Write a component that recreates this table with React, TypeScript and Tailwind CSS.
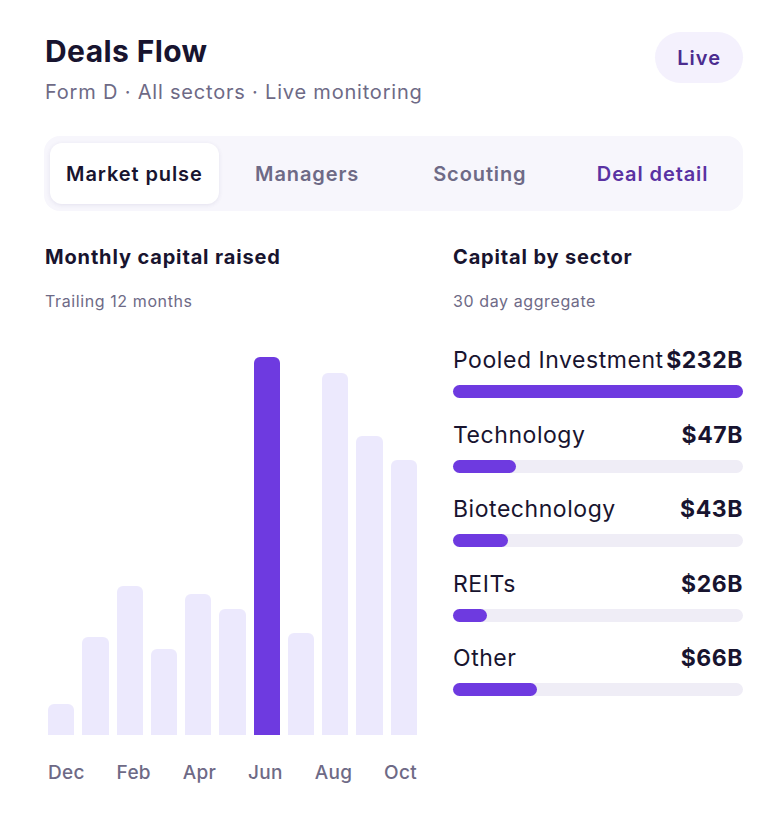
import React from "react";

const bars = [
  { m: "Dec", h: 31 },
  { m: "Jan", h: 98 },
  { m: "Feb", h: 149 },
  { m: "Mar", h: 86 },
  { m: "Apr", h: 141 },
  { m: "May", h: 126 },
  { m: "Jun", h: 378, active: true },
  { m: "Jul", h: 102 },
  { m: "Aug", h: 362 },
  { m: "Sep", h: 299 },
  { m: "Oct", h: 275 },
];

const sectors = [
  { name: "Pooled Investment", value: "$232B", pct: 100 },
  { name: "Technology", value: "$47B", pct: 21.7 },
  { name: "Biotechnology", value: "$43B", pct: 19 },
  { name: "REITs", value: "$26B", pct: 11.7 },
  { name: "Other", value: "$66B", pct: 29 },
];

const tabs = ["Market pulse", "Managers", "Scouting", "Deal detail"];

export default function App() {
  return (
    <div
      className="min-h-[813px] w-full bg-white pl-[44px] pr-[39px] pt-8 text-[#18142f]"
      style={{ fontFamily: "Inter, 'Noto Sans', sans-serif" }}
    >
      <div className="flex items-start justify-between">
        <div className="pl-px">
          <h1 className="text-[30px] font-bold leading-[38px] tracking-[0.4px] text-[#18142f]">
            Deals Flow
          </h1>
          <p className="mt-2 text-[20px] leading-[28px] tracking-[0.8px] text-[#6e6a86]">
            Form D · All sectors · Live monitoring
          </p>
        </div>
        <div className="flex h-[51px] items-center rounded-full bg-[#f4f1fd] px-[22px] text-[20px] font-semibold tracking-[1px] text-[#4b2c8f]">
          Live
        </div>
      </div>

      <div className="mt-[30px] flex gap-1 rounded-2xl bg-[#f7f6fc] px-1.5 py-[7px]">
        {tabs.map((t, i) => (
          <div
            key={t}
            className={
              i === 0
                ? "flex h-[61px] flex-1 items-center justify-center rounded-xl bg-white text-[20px] font-semibold tracking-[0.9px] text-[#18142f] shadow-[0_1px_4px_rgba(60,50,120,0.10)]"
                : i === 3
                ? "flex h-[61px] flex-1 items-center justify-center rounded-xl text-[20px] font-semibold tracking-[0.9px] text-[#5a32a3]"
                : "flex h-[61px] flex-1 items-center justify-center rounded-xl text-[20px] font-semibold tracking-[0.9px] text-[#6e6a86]"
            }
          >
            {t}
          </div>
        ))}
      </div>

      <div className="mt-8 grid grid-cols-[377px_290px] gap-x-8">
        <div>
          <h2 className="pl-px text-[20px] font-bold leading-[28px] tracking-[0.85px] text-[#18142f]">
            Monthly capital raised
          </h2>
          <p className="mt-[18px] pl-px text-[16px] leading-[24px] tracking-[0.6px] text-[#6e6a86]">
            Trailing 12 months
          </p>
          <div className="mt-[44px] flex h-[378px] items-end gap-2 px-1">
            {bars.map((b) => (
              <div
                key={b.m}
                className={
                  b.active
                    ? "flex-1 rounded-t-md bg-[#6e3ae0]"
                    : "flex-1 rounded-t-md bg-[#ece9fd]"
                }
                style={{ height: `${b.h}px` }}
              />
            ))}
          </div>
          <div className="mt-[25px] flex justify-between px-1 text-[19px] font-medium leading-[26px] tracking-[0.3px] text-[#6e6a86]">
            {["Dec", "Feb", "Apr", "Jun", "Aug", "Oct"].map((m) => (
              <span key={m}>{m}</span>
            ))}
          </div>
        </div>

        <div>
          <h2 className="text-[20px] font-bold leading-[28px] tracking-[0.85px] text-[#18142f]">
            Capital by sector
          </h2>
          <p className="mt-[18px] text-[16px] leading-[24px] tracking-[0.6px] text-[#6e6a86]">
            30 day aggregate
          </p>
          <div className="mt-[33px] flex flex-col gap-[22.5px]">
            {sectors.map((s) => (
              <div key={s.name}>
                <div className="flex items-center justify-between text-[23px] leading-[28px] tracking-[0.55px] text-[#18142f]">
                  <span className="whitespace-nowrap">{s.name}</span>
                  <span className="whitespace-nowrap font-bold">{s.value}</span>
                </div>
                <div className="mt-[11px] h-[13px] w-full rounded-full bg-[#efedf6]">
                  <div
                    className="h-full rounded-full bg-[#6e3ae0]"
                    style={{ width: `${s.pct}%` }}
                  />
                </div>
              </div>
            ))}
          </div>
        </div>
      </div>
    </div>
  );
}
